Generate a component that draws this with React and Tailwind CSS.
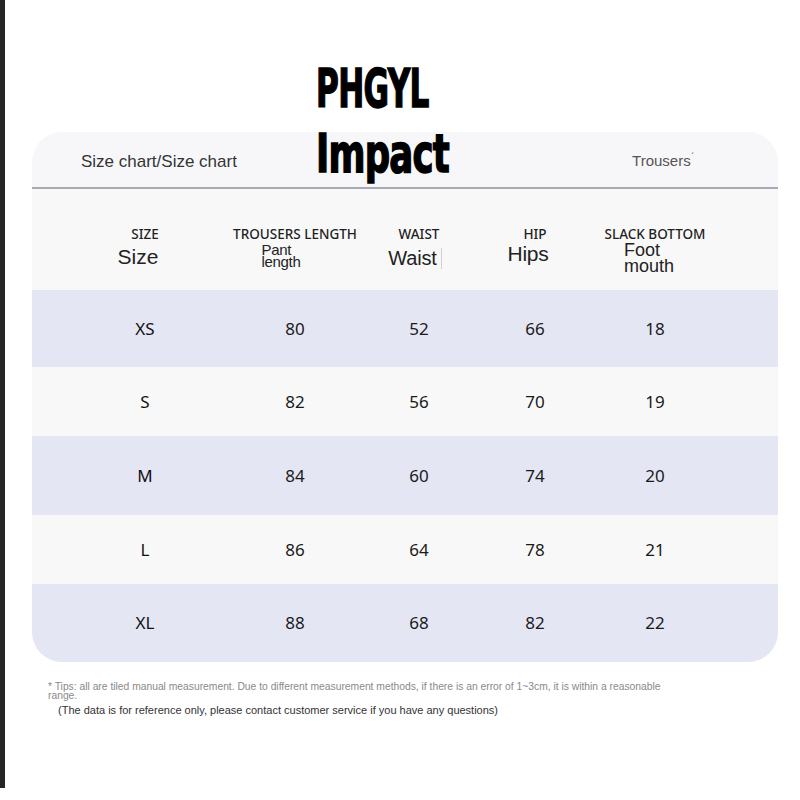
const rows = [
  { size: "XS", vals: ["80", "52", "66", "18"], h: "h-[77px]", bg: "bg-[#e4e6f3]" },
  { size: "S", vals: ["82", "56", "70", "19"], h: "h-[69px]", bg: "bg-[#f8f8f8]" },
  { size: "M", vals: ["84", "60", "74", "20"], h: "h-[79px]", bg: "bg-[#e4e6f3]" },
  { size: "L", vals: ["86", "64", "78", "21"], h: "h-[69px]", bg: "bg-[#f8f8f8]" },
  { size: "XL", vals: ["88", "68", "82", "22"], h: "h-[78px]", bg: "bg-[#e4e6f3]" },
];

const grid = "grid grid-cols-[146px_154px_94px_138px_102px] pl-[40px]";
const sans = "font-['Liberation_Sans',Arial,sans-serif]";
const noto = "font-['Noto_Sans',sans-serif]";

function HeaderCell({ top, children }) {
  return (
    <div className="flex flex-col items-center">
      <div className={`${noto} text-[13.5px] font-medium leading-[16px] text-[#1f1f1f] whitespace-nowrap`}>
        {top}
      </div>
      {children}
    </div>
  );
}

export default function App() {
  return (
    <div className="relative flex h-[800px] w-[800px] bg-white">
      <div className="h-[788px] w-[5px] bg-[#262626]" />

      <div className="ml-[27px] pt-[132px]">
        <div className="w-[746px] overflow-hidden rounded-[30px]">
          <div className="flex h-[57px] items-center justify-between border-b-2 border-[#a9aab6] bg-[#f7f7f9] pl-[49px] pr-[84px] pt-[4px]">
            <span className={`${sans} text-[17px] text-[#333]`}>
              Size chart/Size chart
            </span>
            <span className={`${sans} text-[15px] text-[#555]`}>
              Trousers<span className="text-[10px] align-top">ˊ</span>
            </span>
          </div>

          <div className={`${grid} h-[101px] items-start bg-[#f8f8f8] pt-[37px]`}>
            <HeaderCell top="SIZE">
              <span className={`${sans} mr-[14px] mt-[4px] text-[21px] leading-[22px] text-[#222]`}>Size</span>
            </HeaderCell>
            <HeaderCell top="TROUSERS LENGTH">
              <span className={`${sans} mr-[28px] mt-[2px] text-[15px] leading-[12px] tracking-[-0.3px] text-[#222]`}>
                Pant
                <br />
                length
              </span>
            </HeaderCell>
            <HeaderCell top="WAIST">
              <span className="mr-[8px] mt-[5px] flex items-center">
                <span className={`${sans} text-[20px] leading-[22px] tracking-[-0.2px] text-[#222]`}>Waist</span>
                <span className="ml-[4px] h-[21px] border-l border-[#cfcfcf]" />
              </span>
            </HeaderCell>
            <HeaderCell top="HIP">
              <span className={`${sans} mr-[14px] mt-[1px] text-[21px] leading-[22px] tracking-[-0.3px] text-[#222]`}>Hips</span>
            </HeaderCell>
            <HeaderCell top="SLACK BOTTOM">
              <span className={`${sans} mr-[12px] text-[18px] leading-[16px] text-[#222]`}>
                Foot
                <br />
                mouth
              </span>
            </HeaderCell>
          </div>

          {rows.map((r) => (
            <div key={r.size} className={`${grid} ${r.h} ${r.bg} items-center`}>
              <div className={`${noto} text-center text-[17px] text-[#111]`}>{r.size}</div>
              {r.vals.map((v, i) => (
                <div key={i} className={`${noto} text-center text-[17px] text-[#1a1a1a]`}>
                  {v}
                </div>
              ))}
            </div>
          ))}
        </div>

        <div className={`${sans} ml-[16px] mt-[20px] text-[10.3px] leading-[9px] text-[#8a8a8a]`}>
          * Tips: all are tiled manual measurement. Due to different measurement methods, if there is an error of 1~3cm, it is within a reasonable
          <br />
          range.
        </div>
        <div className={`${sans} ml-[26px] mt-[3px] text-[11px] leading-[14px] text-[#333]`}>
          (The data is for reference only, please contact customer service if you have any questions)
        </div>
      </div>

      <div className="absolute left-[316px] top-[56px] font-['DejaVu_Sans_Condensed','DejaVu_Sans',sans-serif] text-[54px] font-bold leading-[65px] tracking-[-1px] text-black [-webkit-text-stroke:1.5px_black]">
        <div className="origin-left scale-x-[0.64]">PHGYL</div>
        <div className="origin-left scale-x-[0.73]">Impact</div>
      </div>
    </div>
  );
}
